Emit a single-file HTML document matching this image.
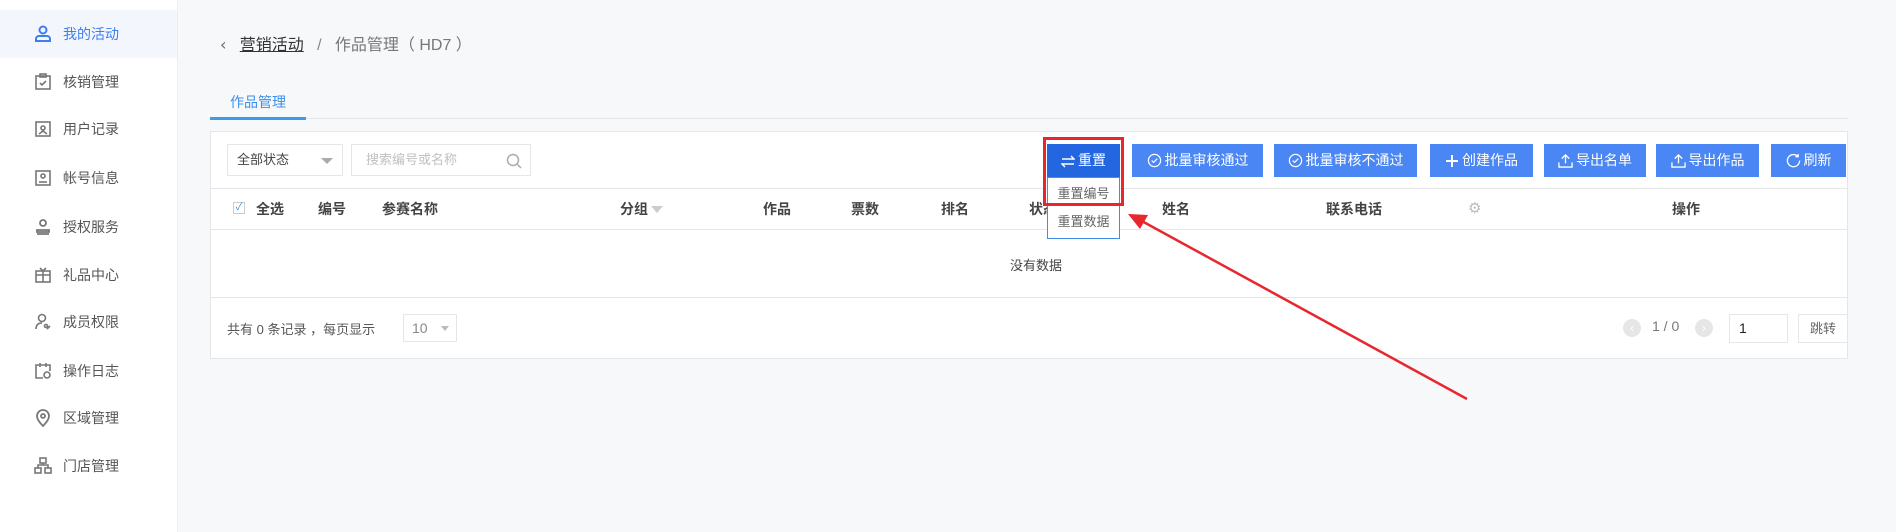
<!DOCTYPE html>
<html><head><meta charset="utf-8"><style>
*{margin:0;padding:0;box-sizing:border-box}
body{width:1896px;height:532px;background:#f7f8fa;font-family:"Liberation Sans","Noto Sans CJK SC",sans-serif;position:relative;overflow:hidden;color:#333}
.a{position:absolute}
.side{left:0;top:0;width:178px;height:532px;background:#fff;border-right:1px solid #eceef2}
.item{position:absolute;left:0;width:177px;height:48px;font-size:14px;color:#555;line-height:48px}
.item span{position:absolute;left:63px}
.item svg{position:absolute;left:34px;top:15px}
.act{background:#f3f6fd;color:#3d7ef0}
.panel{left:210px;top:131px;width:1638px;height:228px;background:#fff;border:1px solid #e4e6ea}
.btn{position:absolute;top:144px;height:33px;background:#4a86f4;color:#fff;font-size:14px;line-height:33px;text-align:center}
.btn svg{vertical-align:-3px;margin-right:3px}
.th{position:absolute;top:199px;font-size:14px;font-weight:bold;color:#444}
</style></head><body>
<div class="a side">
<div class="item act" style="top:10px"><svg width="18" height="18" viewBox="0 0 18 18" fill="none" stroke="#3d7ef0" stroke-width="2"><circle cx="9" cy="5" r="3.5"/><path d="M2 16v-2a3 3 0 0 1 3-3h8a3 3 0 0 1 3 3v2z"/></svg><span>我的活动</span></div>
<div class="item" style="top:58px"><svg width="18" height="18" viewBox="0 0 18 18" fill="none" stroke="#777" stroke-width="1.6"><rect x="2" y="3" width="14" height="13"/><rect x="6" y="1" width="6" height="3"/><path d="M6 10l2 2 4-4"/></svg><span>核销管理</span></div>
<div class="item" style="top:105px"><svg width="18" height="18" viewBox="0 0 18 18" fill="none" stroke="#777" stroke-width="1.6"><rect x="2" y="2" width="14" height="14"/><circle cx="9" cy="8" r="2"/><path d="M5 14l4-3 4 3"/></svg><span>用户记录</span></div>
<div class="item" style="top:154px"><svg width="18" height="18" viewBox="0 0 18 18" fill="none" stroke="#777" stroke-width="1.6"><rect x="2" y="2" width="14" height="14"/><circle cx="9" cy="7" r="2"/><path d="M5 13h8"/></svg><span>帐号信息</span></div>
<div class="item" style="top:203px"><svg width="18" height="18" viewBox="0 0 18 18" fill="none" stroke="#777" stroke-width="1.8"><circle cx="9" cy="5" r="3"/><path d="M3 12h12v2H3zM3 16h12"/></svg><span>授权服务</span></div>
<div class="item" style="top:251px"><svg width="18" height="18" viewBox="0 0 18 18" fill="none" stroke="#777" stroke-width="1.6"><rect x="2" y="5" width="14" height="11"/><path d="M2 9h14M9 5v11M6 2l3 3 3-3"/></svg><span>礼品中心</span></div>
<div class="item" style="top:298px"><svg width="18" height="18" viewBox="0 0 18 18" fill="none" stroke="#777" stroke-width="1.6"><circle cx="8" cy="5" r="3.5"/><path d="M2 16c0-4 2-6 6-6M13 16l3-3"/><circle cx="12" cy="13" r="1.5"/></svg><span>成员权限</span></div>
<div class="item" style="top:347px"><svg width="18" height="18" viewBox="0 0 18 18" fill="none" stroke="#777" stroke-width="1.6"><path d="M9 16H2V3h14v6M6 1v4M12 1v4"/><circle cx="13" cy="13" r="3"/></svg><span>操作日志</span></div>
<div class="item" style="top:394px"><svg width="18" height="18" viewBox="0 0 18 18" fill="none" stroke="#777" stroke-width="1.8"><path d="M9 17c-4-4-6-7-6-10a6 6 0 0 1 12 0c0 3-2 6-6 10z"/><circle cx="9" cy="7" r="2"/></svg><span>区域管理</span></div>
<div class="item" style="top:442px"><svg width="18" height="18" viewBox="0 0 18 18" fill="none" stroke="#777" stroke-width="1.6"><rect x="6" y="1" width="6" height="5"/><rect x="1" y="11" width="6" height="5"/><rect x="11" y="11" width="6" height="5"/><path d="M4 11V8h10v3M9 6v2"/></svg><span>门店管理</span></div>
</div>

<div class="a" style="left:220px;top:33px;font-size:16px;color:#555;line-height:24px">
<span style="font-family:'DejaVu Sans';color:#666">‹</span>&nbsp;&nbsp;&nbsp;<span style="text-decoration:underline;color:#333">营销活动</span>&nbsp;&nbsp;&nbsp;<span style="color:#888">/</span>&nbsp;&nbsp;&nbsp;<span style="color:#777">作品管理（ HD7 ）</span></div>

<div class="a" style="left:230px;top:92px;font-size:14px;color:#3d8fe8">作品管理</div>
<div class="a" style="left:210px;top:118px;width:1638px;height:1px;background:#e4e6ea"></div>
<div class="a" style="left:210px;top:117px;width:96px;height:3px;background:#3d9be9"></div>

<div class="a panel"></div>
<div class="a" style="left:227px;top:144px;width:116px;height:32px;border:1px solid #e4e6ea;font-size:13px;color:#444;line-height:30px;padding-left:9px">全部状态<span style="position:absolute;right:9px;top:13px;border:6px solid transparent;border-top:6px solid #aaa"></span></div>
<div class="a" style="left:351px;top:144px;width:180px;height:32px;border:1px solid #e4e6ea;font-size:13px;color:#c0c0c0;line-height:30px;padding-left:14px">搜索编号或名称<svg style="position:absolute;right:8px;top:8px" width="16" height="16" viewBox="0 0 16 16" fill="none" stroke="#aaa" stroke-width="1.5"><circle cx="7" cy="7" r="5.5"/><path d="M11 11l4 4"/></svg></div>

<div class="btn" style="left:1047px;width:73px;background:#2466e0"><svg width="14" height="14" viewBox="0 0 14 14" fill="none" stroke="#fff" stroke-width="1.4"><path d="M1 5h12l-3-3M13 10H1l3 3"/></svg>重置</div>
<div class="btn" style="left:1132px;width:131px"><svg width="15" height="15" viewBox="0 0 16 16" fill="none" stroke="#fff" stroke-width="1.3"><circle cx="8" cy="8" r="6.5"/><path d="M5 8l2 2 4-4"/></svg>批量审核通过</div>
<div class="btn" style="left:1274px;width:143px"><svg width="15" height="15" viewBox="0 0 16 16" fill="none" stroke="#fff" stroke-width="1.3"><circle cx="8" cy="8" r="6.5"/><path d="M5 8l2 2 4-4"/></svg>批量审核不通过</div>
<div class="btn" style="left:1430px;width:103px"><svg width="14" height="14" viewBox="0 0 14 14" fill="none" stroke="#fff" stroke-width="2"><path d="M7 1v12M1 7h12"/></svg>创建作品</div>
<div class="btn" style="left:1544px;width:102px"><svg width="15" height="15" viewBox="0 0 16 16" fill="none" stroke="#fff" stroke-width="1.4"><path d="M8 11V2M4 6l4-4 4 4M1 10v5h14v-5"/></svg>导出名单</div>
<div class="btn" style="left:1656px;width:103px"><svg width="15" height="15" viewBox="0 0 16 16" fill="none" stroke="#fff" stroke-width="1.4"><path d="M8 11V2M4 6l4-4 4 4M1 10v5h14v-5"/></svg>导出作品</div>
<div class="btn" style="left:1771px;width:75px"><svg width="15" height="15" viewBox="0 0 16 16" fill="none" stroke="#fff" stroke-width="1.4"><path d="M13 4A6.5 6.5 0 1 0 14.5 8M13 1v3h-3"/></svg>刷新</div>

<div class="a" style="left:210px;top:188px;width:1638px;height:1px;background:#e4e6ea"></div>
<div class="a" style="left:210px;top:229px;width:1638px;height:1px;background:#e4e6ea"></div>
<div class="a" style="left:233px;top:202px;width:12px;height:12px;border:1px solid #ccc;font-size:10px;color:#3d8fe8;line-height:10px;text-align:center">✓</div>
<div class="th" style="left:256px">全选</div>
<div class="th" style="left:318px">编号</div>
<div class="th" style="left:382px">参赛名称</div>
<div class="th" style="left:620px">分组<span style="display:inline-block;margin-left:3px;border:6px solid transparent;border-top:7px solid #ccc;vertical-align:-5px"></span></div>
<div class="th" style="left:763px">作品</div>
<div class="th" style="left:851px">票数</div>
<div class="th" style="left:941px">排名</div>
<div class="th" style="left:1029px">状态</div>
<div class="th" style="left:1162px">姓名</div>
<div class="th" style="left:1326px">联系电话</div>
<div class="a" style="left:1468px;top:199px;font-size:15px;color:#bbb">⚙</div>
<div class="th" style="left:1672px">操作</div>

<div class="a" style="left:1047px;top:177px;width:73px;height:62px;background:#fff;border:1px solid #3d8fe8;font-size:13px;color:#666;line-height:28px;text-align:center;padding-top:2px">重置编号<br>重置数据</div>
<div class="a" style="left:1043px;top:137px;width:81px;height:69px;border:3px solid #e8262e"></div>

<div class="a" style="left:1010px;top:255px;font-size:13px;color:#444">没有数据</div>
<div class="a" style="left:210px;top:297px;width:1638px;height:1px;background:#e4e6ea"></div>

<div class="a" style="left:227px;top:319px;font-size:13px;color:#555">共有 0 条记录 ，每页显示</div>
<div class="a" style="left:403px;top:314px;width:54px;height:28px;border:1px solid #e4e6ea;font-size:14px;color:#888;line-height:26px;padding-left:8px">10<span style="position:absolute;right:7px;top:11px;border:4px solid transparent;border-top:5px solid #bbb"></span></div>
<div class="a" style="left:1623px;top:319px;width:18px;height:18px;border-radius:50%;background:#e6e6e6;color:#fff;font-size:12px;line-height:18px;text-align:center">‹</div>
<div class="a" style="left:1652px;top:318px;font-size:14px;color:#777">1 / 0</div>
<div class="a" style="left:1695px;top:319px;width:18px;height:18px;border-radius:50%;background:#e6e6e6;color:#fff;font-size:12px;line-height:18px;text-align:center">›</div>
<div class="a" style="left:1729px;top:314px;width:59px;height:29px;border:1px solid #e4e6ea;font-size:14px;color:#222;line-height:27px;padding-left:9px">1</div>
<div class="a" style="left:1798px;top:314px;width:50px;height:29px;border:1px solid #e4e6ea;font-size:13px;color:#666;line-height:27px;text-align:center">跳转</div>

<svg class="a" style="left:0;top:0" width="1896" height="532"><line x1="1467" y1="399" x2="1140" y2="220" stroke="#e8262e" stroke-width="2.5"/><path d="M1128 214l20 1-8 14z" fill="#e8262e"/></svg>
</body></html>
